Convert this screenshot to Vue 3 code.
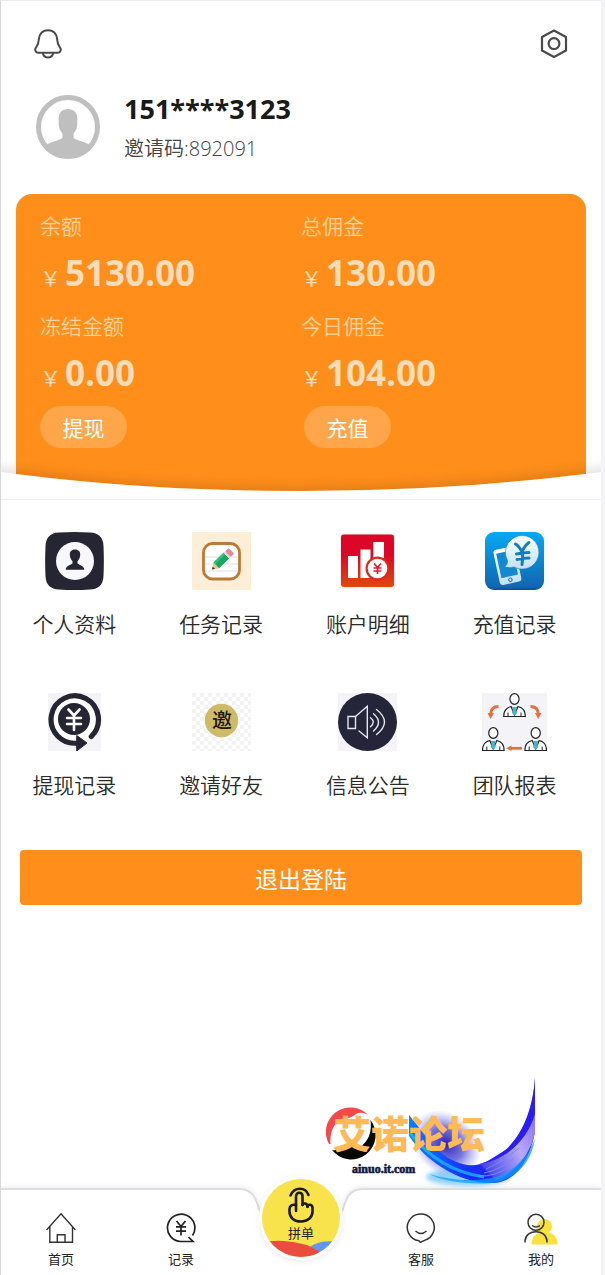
<template>
  <div class="shell">
    <div class="page">
      <!-- 顶部图标 -->
      <header class="topbar">
        <button class="icon-btn" aria-label="消息">
          <svg width="28" height="30" viewBox="0 0 28 30" fill="none" stroke="#4a4a4c" stroke-width="2">
            <path d="M14 1.2C8.3 1.2 5 5.4 4.8 10.4C4.6 14.6 3.9 16.2 2.3 18.1C.2 20.6 1.4 23.8 4.6 23.8H23.4C26.6 23.8 27.8 20.6 25.7 18.1C24.1 16.2 23.4 14.6 23.2 10.4C23 5.4 19.7 1.2 14 1.2Z" />
            <path d="M8.8 24C9.4 27 11.4 28.6 14 28.6S18.6 27 19.2 24" />
          </svg>
        </button>
        <button class="icon-btn" aria-label="设置">
          <svg width="28" height="30" viewBox="0 0 28 30" fill="none" stroke="#4a4a4c" stroke-width="2.2" stroke-linejoin="round">
            <path d="M14 1.5L26 8V21.5L14 28L2 21.5V8Z" />
            <circle cx="14" cy="14.6" r="5.4" />
          </svg>
        </button>
      </header>

      <!-- 用户信息 -->
      <section class="profile">
        <svg class="avatar" width="64" height="64" viewBox="0 0 64 64">
          <circle cx="32" cy="32" r="29.5" fill="#fff" stroke="#bfbfbf" stroke-width="5" />
          <path
            fill="#bfbfbf"
            d="M32 14C37.8 14 41.3 17.8 41.3 23.5V29C41.3 33.5 39.6 35.8 37.6 38.5V43C42 46.2 50 46.8 54.5 50.5C49 58.5 41 63 32 63S15 58.5 9.5 50.5C14 46.8 22 46.2 26.4 43V38.5C24.4 35.8 22.7 33.5 22.7 29V23.5C22.7 17.8 26.2 14 32 14Z"
          />
        </svg>
        <div>
          <div class="name">151****3123</div>
          <div class="code">邀请码:892091</div>
        </div>
      </section>

      <!-- 资产卡片 -->
      <section class="wallet">
        <div class="card">
          <div class="amounts">
            <div v-for="a in amounts" :key="a.label">
              <div class="amount-label">{{ a.label }}</div>
              <div class="amount"><span class="unit">￥</span>{{ a.value }}</div>
            </div>
          </div>
          <div class="actions">
            <button class="pill">提现</button>
            <button class="pill">充值</button>
          </div>
        </div>
        <svg class="curve" viewBox="0 0 601 40" preserveAspectRatio="none">
          <path d="M-20 11Q0 13 15 15Q150 32 300 32T585 15Q601 13 621 11V60H-20Z" fill="#fff" />
        </svg>
      </section>

      <!-- 功能菜单 -->
      <nav class="menu">
        <a v-for="m in menus" :key="m.key" class="menu-item" href="#">
          <svg v-if="m.key === 'profile'" width="59" height="58" viewBox="0 0 59 58">
            <path d="M14 .5Q29.500-.5 45 .5Q58 1 58.500 14Q59.200 29 58.500 44Q58 57 45 57.500Q29.500 58.500 14 57.500Q1 57 .5 44Q-.2 29 .5 14Q1 1 14 .5Z" fill="#262533" />
            <circle cx="30" cy="29" r="19" fill="#f8f7fb" />
            <path d="M30 17.500C33.500 17.500 35.500 19.800 35.200 23C35 26 34 27.500 32.500 29.200V31.500C35 33.300 39 33.500 39.300 37.800H20.700C21 33.500 25 33.300 27.500 31.500V29.200C26 27.500 25 26 24.800 23C24.500 19.800 26.500 17.500 30 17.500Z" fill="#262533" />
          </svg>

          <svg v-else-if="m.key === 'task'" width="59" height="58" viewBox="0 0 59 58">
            <rect width="59" height="58" fill="#fdeed8" />
            <rect x="11.500" y="11.500" width="36" height="35.500" rx="9" fill="#fff" stroke="#bd7a37" stroke-width="2.800" />
            <path d="M13 25H46M13 32H46M13 39H46" stroke="#dcdde2" stroke-width="1" />
            <g transform="translate(20 37.500) rotate(-44)">
              <path d="M0 0L6-4V4Z" fill="#eec28e" />
              <path d="M0 0L2.500-1.700V1.700Z" fill="#4b3a33" />
              <rect x="6" y="-4" width="14" height="8" fill="#16a85c" />
              <rect x="6" y="-4" width="14" height="2.600" fill="#2cc274" />
              <rect x="20" y="-4" width="2" height="8" fill="#d9dde0" />
              <rect x="22" y="-4" width="5" height="8" rx="1.500" fill="#e58b98" />
            </g>
          </svg>

          <svg v-else-if="m.key === 'account'" width="59" height="58" viewBox="0 0 59 58">
            <defs>
              <linearGradient id="red" x1="0" y1="0" x2="0" y2="1">
                <stop offset=".4" stop-color="#dc0728" />
                <stop offset="1" stop-color="#de4a0c" />
              </linearGradient>
            </defs>
            <rect x="2" y="1.500" width="55" height="55" rx="3" fill="#f8eeee" />
            <rect x="3" y="2.500" width="53" height="52.500" rx="3" fill="url(#red)" />
            <path d="M10 24H20V46H10ZM22.500 17.500H32.500V46H22.500ZM35.300 10H46V26H35.300Z" fill="#fff" />
            <circle cx="39.500" cy="36.500" r="12" fill="#dc2a1b" />
            <circle cx="39.500" cy="36.500" r="9.800" fill="#fff" />
            <path d="M36 31.500L39.500 35.500L43 31.500M35.500 36H43.500M35.500 39H43.500M39.500 35.500V42" fill="none" stroke="#d9202c" stroke-width="1.700" />
          </svg>

          <svg v-else-if="m.key === 'recharge'" width="59" height="58" viewBox="0 0 59 58">
            <defs>
              <linearGradient id="blue" x1="0" y1="0" x2="0" y2="1">
                <stop offset="0" stop-color="#05a9f2" />
                <stop offset=".95" stop-color="#1166b0" />
                <stop offset="1" stop-color="#0b4d8e" />
              </linearGradient>
              <linearGradient id="pale" x1="0" y1="0" x2="0" y2="1">
                <stop offset="0" stop-color="#fff" />
                <stop offset="1" stop-color="#c4e0f4" />
              </linearGradient>
            </defs>
            <rect width="59" height="58" rx="9" fill="url(#blue)" />
            <g transform="rotate(-12 23 34)">
              <rect x="11.500" y="15.500" width="22" height="36" rx="3" fill="url(#pale)" />
              <rect x="14" y="19.500" width="17" height="25" fill="#1488d0" />
              <circle cx="22.500" cy="48" r="1.700" fill="none" stroke="#1b6fb0" stroke-width="1" />
            </g>
            <path d="M37.300 3.500A16.800 16.800 0 1 1 29 35C26 36 22 36 19.500 34.500C22 33.500 23 31 22.300 28A16.800 16.800 0 0 1 37.300 3.500Z" fill="url(#pale)" stroke="#1682c8" stroke-width=".6" />
            <path d="M30.500 12Q34 14 37 20Q40 13 44 10.500M31.500 22Q38 20.500 44 20.500M32 27.500Q38 26 44 26M37.500 20Q38 27 37 32.500" fill="none" stroke="#147dc0" stroke-width="3" stroke-linecap="round" />
          </svg>

          <svg v-else-if="m.key === 'withdraw'" width="59" height="58" viewBox="0 0 59 58">
            <rect x="3" width="53" height="58" fill="#f3f3f8" />
            <circle cx="29" cy="26" r="23.500" fill="#fff" />
            <path d="M46.300 43.500A23.700 23.700 0 1 0 33 50" fill="none" stroke="#262533" stroke-width="5.200" stroke-linecap="round" />
            <circle cx="29" cy="26" r="16" fill="#262533" />
            <path d="M31.700 42.500L42 50L31.700 58Z" fill="#262533" stroke="#262533" stroke-width="1" stroke-linejoin="round" />
            <path d="M23.500 16.500L29 22.500L34.500 16.500M22 25H36M22 31H36M29 23V37" fill="none" stroke="#fff" stroke-width="2.600" stroke-linecap="round" />
          </svg>

          <svg v-else-if="m.key === 'invite'" width="59" height="58" viewBox="0 0 59 58">
            <defs>
              <pattern id="checker" width="8" height="8" patternUnits="userSpaceOnUse">
                <rect width="8" height="8" fill="#fff" />
                <path d="M0 0H4V4H0ZM4 4H8V8H4Z" fill="#f3f3f3" />
              </pattern>
            </defs>
            <rect width="59" height="58" fill="url(#checker)" />
            <circle cx="29.500" cy="27.500" r="16.700" fill="#cebb68" />
            <text x="30" y="35" class="seal">邀</text>
          </svg>

          <svg v-else-if="m.key === 'notice'" width="59" height="58" viewBox="0 0 59 58">
            <rect width="59" height="58" fill="#f5f3f7" />
            <ellipse cx="29.500" cy="29" rx="29.500" ry="29" fill="#25253a" />
            <g fill="none" stroke="#e6e6ee" stroke-width="1.400" stroke-linecap="round">
              <path d="M10 23.500H17.500V35.500H10Z" />
              <path d="M17.500 23.500L29.300 13.300V44.700L21 38" />
              <path d="M32.500 24.700Q38 29 32.500 33.700" />
              <path d="M35.500 20.700Q45.500 29 35.500 38" />
              <path d="M38.500 16.500Q54.500 29 38.500 41.500" />
            </g>
          </svg>

          <svg v-else width="65" height="58" viewBox="0 0 65 58">
            <rect width="65" height="58" fill="#f4f3f7" />
            <g v-for="p in people" :key="p.x + '-' + p.y" :transform="`translate(${p.x} ${p.y})`">
              <path d="M-10.800 23.500C-10.800 17-8 14.500-3.500 13.500L0 22L3.500 13.500C8 14.500 10.800 17 10.800 23.500Z" fill="#fff" stroke="#222" stroke-width="1.200" />
              <path d="M-2.500 14H2.500L1.800 17L2.500 20L0 23L-2.500 20L-1.800 17Z" fill="#47b5c4" />
              <path d="M-6.500 19.500V23.500M6.500 19.500V23.500" stroke="#222" stroke-width="1" />
              <ellipse cy="6" rx="4.600" ry="5.300" fill="#fff" stroke="#222" stroke-width="1.200" />
            </g>
            <g fill="none" stroke="#e27242" stroke-width="2.800">
              <path d="M16.500 13.500Q9 13.500 8.700 21" />
              <path d="M48.500 13.500Q56 13.500 56.300 21" />
              <path d="M40 55.300H28" />
            </g>
            <path d="M5.500 20H12L8.700 26ZM53 20H59.500L56.300 26ZM29.500 52.500V58L24 55.300Z" fill="#e27242" />
          </svg>
          <span class="menu-label">{{ m.label }}</span>
        </a>
      </nav>

      <button class="logout">退出登陆</button>

      <!-- 底部导航 -->
      <nav class="tabbar">
        <svg class="tabbar-bg" viewBox="0 0 2000 90" preserveAspectRatio="xMidYMin slice">
          <path
            d="M-10 4H938C952 4 955 14 958 24C964 44 980 60 1000 60S1036 44 1042 24C1045 14 1048 4 1062 4H2010V100H-10Z"
            fill="#fff"
            stroke="#dcdddf"
            stroke-width="2"
          />
        </svg>

        <a class="tab" href="#">
          <svg width="30" height="30" viewBox="0 0 30 30" fill="none" stroke="#333" stroke-width="1.400">
            <path d="M.5 17L15 .8L29.500 17M3.800 13.500V29.300H26.500V13.500M11.300 29V21.700H19V29" />
          </svg>
          <span>首页</span>
        </a>
        <a class="tab" href="#">
          <svg width="30" height="30" viewBox="0 0 30 30" fill="none" stroke="#222" stroke-width="1.700">
            <path d="M26.500 22.500A13.700 13.700 0 1 0 15 28.500H27L22.500 24" />
            <path d="M10.500 8L15 13.500L19.500 8M10 13.800H20M10 18.200H20M15 13.500V22.500" />
          </svg>
          <span>记录</span>
        </a>
        <a class="tab tab-main" href="#">
          <span class="ball">
            <svg class="ball-waves" width="78" height="18" viewBox="0 0 78 18">
              <path d="M48 8Q58 0 78 3V18H48Z" fill="#5f97f2" />
              <path d="M0 4Q10 1 22 2Q44 3 60 14V18H0Z" fill="#ea4d40" />
            </svg>
            <svg width="26" height="36" viewBox="0 0 26 36" fill="none" stroke="#1d1a10" stroke-width="2.600" stroke-linecap="round" stroke-linejoin="round">
              <path d="M2.500 8.500C4.500 4 8 1.800 12 1.800S19 4 20.500 8" />
              <path d="M8 24V9.500C8 4.500 14.500 4.500 14.500 9.500V18" />
              <path d="M8 18C4.500 17 1.500 18.500 1.500 22V24.500C1.500 31 6.500 34.500 13 34.500S24.500 30.500 24.500 24.500V21C24.500 17 19.800 16.800 19.500 19.500" />
              <path d="M14.500 18C15 15.500 19.500 16 19.500 20" />
            </svg>
            <span>拼单</span>
          </span>
        </a>
        <a class="tab" href="#">
          <svg width="30" height="30" viewBox="0 0 30 30" fill="none" stroke="#333" stroke-width="1.500">
            <path d="M13 27.800A13.500 13.500 0 1 1 18.500 27.400Q16 28 14.500 29.500Z" stroke-linejoin="round" />
            <path d="M9.500 18Q15 23 20.500 18" />
          </svg>
          <span>客服</span>
        </a>
        <a class="tab" href="#">
          <svg width="34" height="32" viewBox="0 0 34 32" fill="none">
            <path d="M7.500 31.500C7.500 25 11 20.500 16 19.500A7.500 7.500 0 1 1 25 19.500C30 20.500 33.500 25 33.500 31.500Z" fill="#f7e23e" />
            <circle cx="12" cy="9.300" r="8" stroke="#333" stroke-width="1.500" />
            <path d="M8 12.500Q12 15.500 16 12.500M1 29.500V28C2 15.500 22 15.500 23 28V29.500" stroke="#333" stroke-width="1.500" />
          </svg>
          <span>我的</span>
        </a>
      </nav>

      <!-- 论坛标志，浮在底部导航之上 -->
      <svg class="brand" width="214" height="116" viewBox="0 0 214 116">
        <defs>
          <linearGradient id="wing" x1="0" y1="0" x2="1" y2="0">
            <stop offset="0" stop-color="#0a7dff" />
            <stop offset=".5" stop-color="#1a2bf5" />
            <stop offset="1" stop-color="#3a20ff" />
          </linearGradient>
          <linearGradient id="veil" x1="0" y1="1" x2="1" y2="0">
            <stop offset="0" stop-color="#2d2be0" />
            <stop offset=".5" stop-color="#b9a9f5" />
            <stop offset="1" stop-color="#6a4df0" />
          </linearGradient>
          <radialGradient id="haze">
            <stop offset="0" stop-color="#2a20b8" />
            <stop offset=".5" stop-color="#4a48d0" stop-opacity=".75" />
            <stop offset="1" stop-color="#7a80f0" stop-opacity="0" />
          </radialGradient>
          <filter id="soft"><feGaussianBlur stdDeviation="2" /></filter>
        </defs>
        <ellipse cx="120" cy="66" rx="38" ry="30" fill="url(#haze)" transform="rotate(42 120 66)" />
        <ellipse cx="142" cy="99" rx="42" ry="9" fill="#49b4ff" opacity=".6" filter="url(#soft)" />
        <path d="M83 37C96 52 104 68 122 80C142 90 150 88 160 84L209 54C204 80 192 103 168 105C130 106 98 80 83 58Z" fill="url(#wing)" />
        <path d="M209 0C207 36 192 76 154 86C160 92 165 98 170 102C192 94 206 72 209 54Z" fill="url(#veil)" />
        <path d="M209 0C206 40 190 76 153 86C182 82 202 60 209 36Z" fill="#2a1cf5" />
        <path d="M160 91Q176 84 193 70M158 95Q174 92 188 80M152 98Q170 99 184 88" fill="none" stroke="#6d8cff" stroke-width="1" />
        <path d="M103 96C130 104 160 104 178 96C192 88 204 76 209 60C206 84 190 102 166 105C142 107 116 103 103 96Z" fill="#0aa0ff" opacity=".75" />
        <path d="M84 55C100 76 124 94 158 99" fill="none" stroke="#18c4ff" stroke-width="3" opacity=".7" />
        <circle cx="25" cy="55" r="22.500" fill="#fff" />
        <path d="M3 66A24.500 24.500 0 0 1 42 37Q36 33 30 36Q24 41 16 41Q3 48 4.500 66Z" fill="#f5474c" />
        <path d="M44.500 42A24 24 0 0 1 6 72Q12 73 18 69Q26 66 34 69Q47 60 44.500 42Z" fill="#070707" />
        <text class="brand-name" x="7" y="70">艾诺论坛</text>
        <text class="brand-url" x="26" y="95">ainuo.it.com</text>
      </svg>
    </div>
  </div>
</template>

<script setup>
const amounts = [
  { label: '余额', value: '5130.00' },
  { label: '总佣金', value: '130.00' },
  { label: '冻结金额', value: '0.00' },
  { label: '今日佣金', value: '104.00' },
]

const menus = [
  { key: 'profile', label: '个人资料' },
  { key: 'task', label: '任务记录' },
  { key: 'account', label: '账户明细' },
  { key: 'recharge', label: '充值记录' },
  { key: 'withdraw', label: '提现记录' },
  { key: 'invite', label: '邀请好友' },
  { key: 'notice', label: '信息公告' },
  { key: 'team', label: '团队报表' },
]

// 团队图标里三个人的位置
const people = [
  { x: 32.5, y: 0 },
  { x: 11.3, y: 34 },
  { x: 53.7, y: 34 },
]
</script>

<style>
body {
  background: #f3f3f5;
}
</style>

<style scoped>
.shell {
  padding-right: 4px;
  font-family: "Open Sans", "Noto Sans CJK SC", sans-serif;
}

.page {
  position: relative;
  box-sizing: border-box;
  min-height: 100vh;
  display: flex;
  flex-direction: column;
  border-top: 1px solid #ececec;
  border-left: 1px solid #d8d8d8;
  background: #fff;
  overflow: hidden;
}

button {
  border: none;
  padding: 0;
  font-family: inherit;
  cursor: pointer;
}

a {
  color: inherit;
  text-decoration: none;
}

svg {
  display: block;
  flex: none;
}

.topbar {
  display: flex;
  justify-content: space-between;
  padding: 28px 33px 0;
}

.icon-btn {
  background: none;
}

.profile {
  display: flex;
  gap: 24px;
  padding: 30px 35px 25px;
}

.avatar {
  margin-top: 6px;
}

.name {
  font-size: 27px;
  font-weight: 700;
  line-height: 40px;
  color: #1a1a1a;
}

.code {
  font-size: 20px;
  font-weight: 350;
  line-height: 40px;
  color: #444;
}

.wallet {
  position: relative;
  padding: 0 15px;
  border-bottom: 1px solid #f0f0f0;
}

.card {
  padding: 15px 24px 51px;
  border-radius: 16px 16px 0 0;
  background: #ff8e1a;
}

.amounts {
  display: grid;
  grid-template-columns: 1fr 1fr;
  row-gap: 6px;
}

.amount-label {
  font-size: 21px;
  font-weight: 350;
  line-height: 34px;
  color: #ffd49c;
}

.amount {
  font-size: 35px;
  font-weight: 700;
  line-height: 60px;
  color: #fbdcb8;
}

.unit {
  margin-right: 4px;
  font-size: 21px;
  font-weight: 400;
  line-height: 1;
}

.actions {
  display: grid;
  grid-template-columns: 1fr 1fr;
  column-gap: 6px;
  margin-top: 3px;
}

.pill {
  width: 87px;
  height: 42px;
  border-radius: 21px;
  background: #ffa54a;
  color: #fff;
  font-size: 21px;
}

.curve {
  position: absolute;
  left: 0;
  bottom: 0;
  width: 100%;
  height: 40px;
  overflow: visible;
  filter: drop-shadow(0 -4px 6px rgba(0, 0, 0, 0.12));
  clip-path: inset(-30px 0 0 0);
}

.menu {
  display: grid;
  grid-template-columns: repeat(4, 1fr);
  row-gap: 54px;
  padding: 32px 13px 0 0;
}

.menu-item {
  display: flex;
  flex-direction: column;
  align-items: center;
}

.menu-label {
  margin-top: 19px;
  font-size: 21px;
  font-weight: 350;
  line-height: 30px;
  color: #2a2a2a;
}

.seal {
  font-size: 20px;
  font-weight: 500;
  text-anchor: middle;
  fill: #1b1810;
}

.logout {
  height: 55px;
  margin: 50px 19px 40px;
  border-radius: 4px;
  background: #ff8e1a;
  color: #fff;
  font-size: 23px;
}

.tabbar {
  position: relative;
  display: grid;
  grid-template-columns: repeat(5, 1fr);
  height: 86px;
  margin-top: auto;
}

.tabbar-bg {
  position: absolute;
  left: 0;
  bottom: 0;
  width: 100%;
  height: 90px;
  filter: drop-shadow(0 -2px 2px rgba(0, 0, 0, 0.06));
}

.tab {
  position: relative;
  display: flex;
  flex-direction: column;
  align-items: center;
  justify-content: space-between;
  padding: 24px 0 6px;
  font-size: 13px;
  line-height: 20px;
  color: #222;
}

.tab-main {
  padding: 0;
}

.ball {
  position: relative;
  display: flex;
  flex-direction: column;
  align-items: center;
  box-sizing: border-box;
  width: 78px;
  height: 78px;
  margin-top: -10px;
  padding-top: 8px;
  border-radius: 50%;
  background: #f9e34c;
  box-shadow: 0 0 0 3px #fff, 0 2px 6px 3px rgba(0, 0, 0, 0.08);
  overflow: hidden;
}

.ball-waves {
  position: absolute;
  left: 0;
  bottom: 0;
}

.brand {
  position: absolute;
  right: 61px;
  bottom: 81px;
  pointer-events: none;
}

.brand-name {
  font-family: "Noto Sans CJK SC", sans-serif;
  font-size: 38px;
  font-weight: 900;
  fill: #ffb957;
}

.brand-url {
  font-family: "Liberation Serif", serif;
  font-size: 12px;
  font-weight: 700;
  fill: #10183f;
  stroke: #10183f;
  stroke-width: 0.6;
}
</style>
